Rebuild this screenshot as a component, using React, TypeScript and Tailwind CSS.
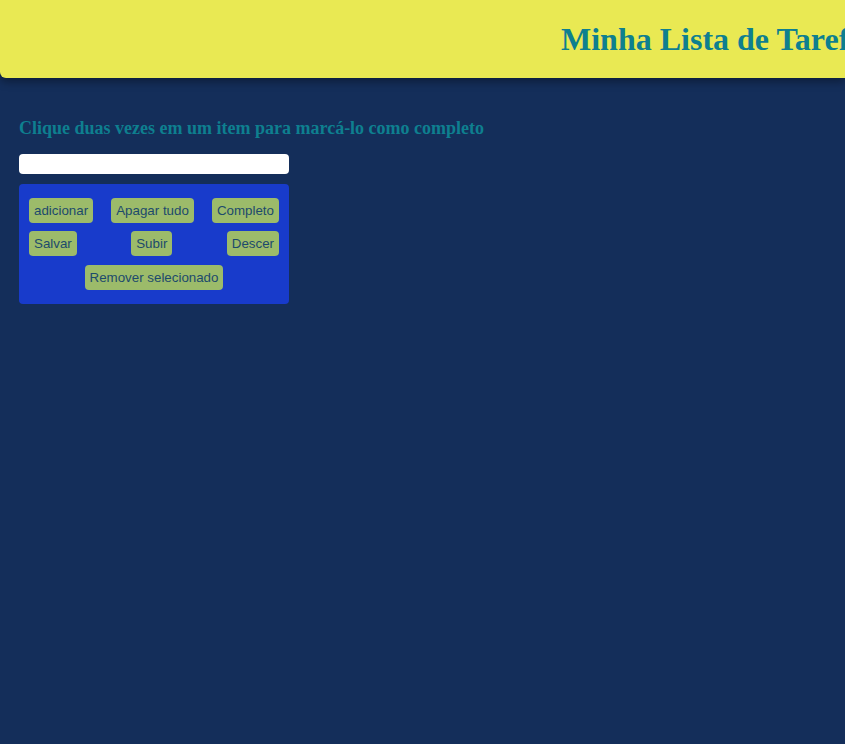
export default function App() {
  const btn =
    "h-[25px] px-[5px] rounded-[4px] bg-[#9cbb6a] text-[#1d4a6c] text-[13.333px] leading-none";
  return (
    <div className="min-h-[744px] w-full overflow-hidden bg-[#142e5a] font-['Liberation_Serif',serif]">
      <header className="h-[78px] bg-[#e9e953] rounded-bl-[6px] shadow-[0_4px_8px_rgba(0,0,0,0.35)] flex items-center pl-[561px] whitespace-nowrap">
        <h1 className="text-[32px] font-bold text-[#0e7f8f]">
          Minha Lista de Tarefas
        </h1>
      </header>

      <main className="px-[19px] pt-[38px]">
        <h2 className="text-[18px] font-bold text-[#0e7f8f] leading-6">
          Clique duas vezes em um item para marcá-lo como completo
        </h2>

        <input
          type="text"
          className="mt-[14px] block w-[270px] h-[20px] rounded-[4px] bg-white outline-none"
        />

        <div className="mt-[10px] w-[270px] rounded-[4px] bg-[#183bcb] px-[10px] pt-[14px] pb-[14px] flex flex-col gap-[8px] font-['Liberation_Sans',Arial,sans-serif]">
          <div className="flex justify-between">
            <button className={btn}>adicionar</button>
            <button className={btn}>Apagar tudo</button>
            <button className={btn}>Completo</button>
          </div>
          <div className="flex justify-between">
            <button className={btn}>Salvar</button>
            <button className={btn}>Subir</button>
            <button className={btn}>Descer</button>
          </div>
          <div className="flex justify-center mt-[1px]">
            <button className={btn}>Remover selecionado</button>
          </div>
        </div>
      </main>
    </div>
  );
}
